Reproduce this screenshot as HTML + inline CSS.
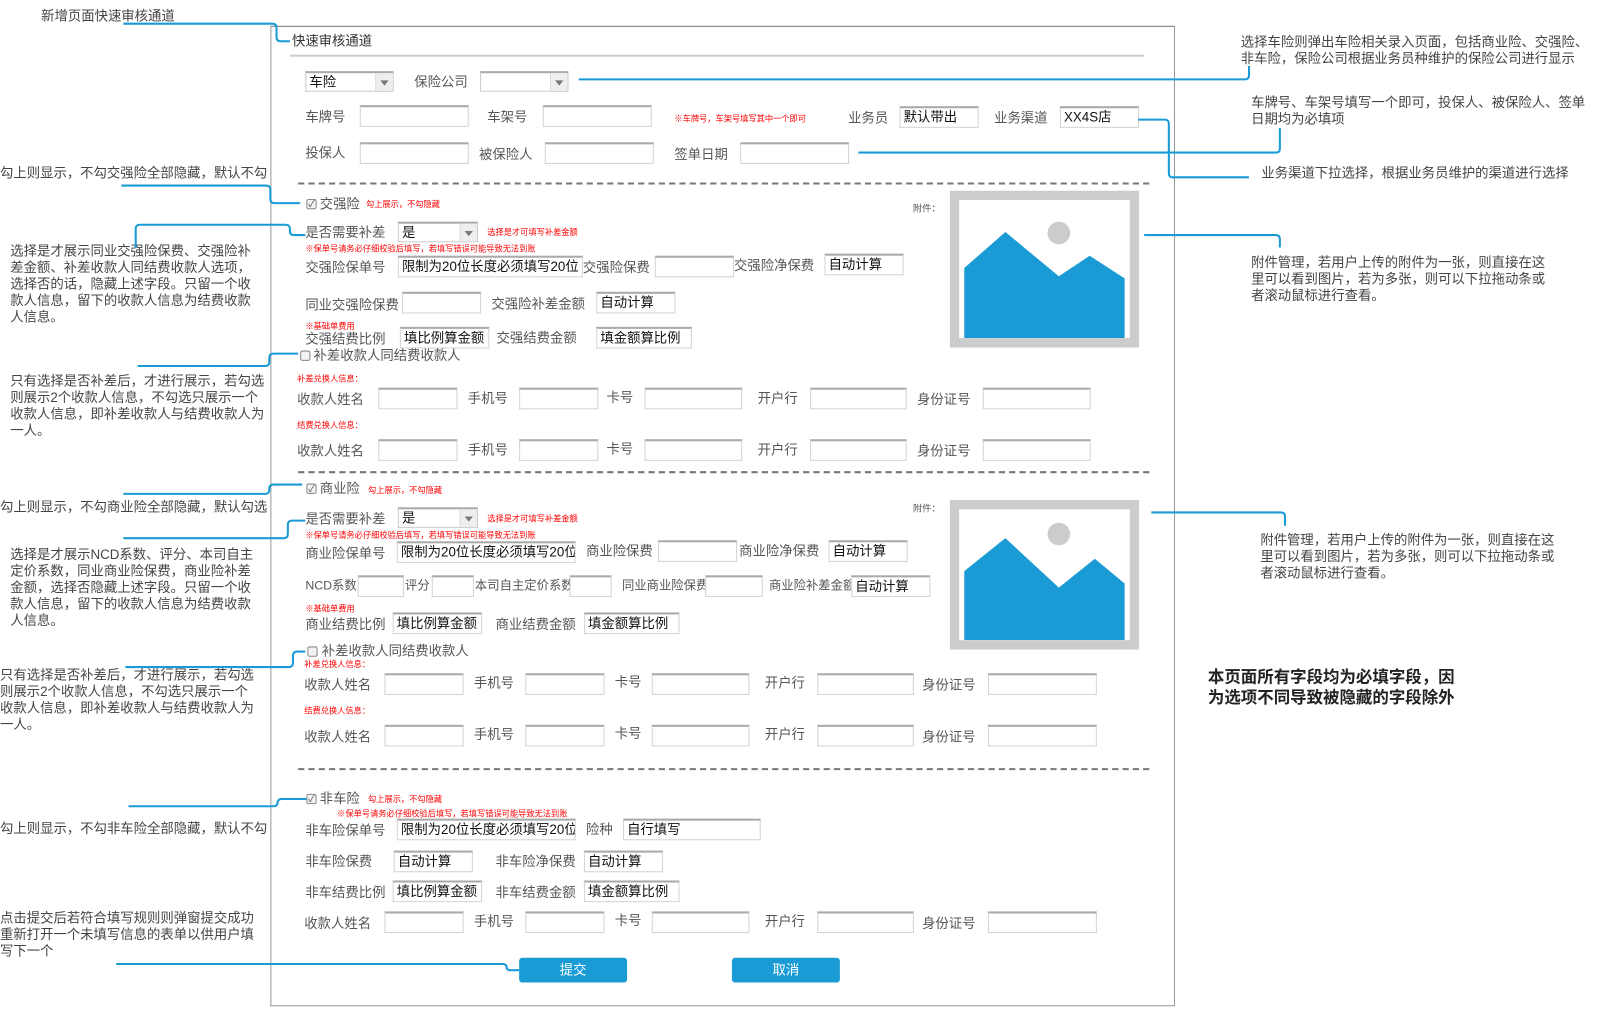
<!DOCTYPE html>
<html><head><meta charset="utf-8"><style>
*{margin:0;padding:0;box-sizing:border-box}
body{width:1610px;height:1015px;overflow:hidden;background:#fff;font-family:"Liberation Sans","Noto Sans CJK SC",sans-serif}
#c{position:absolute;left:0;top:0;width:1560px;height:984px;transform:scale(1.028,1.031);transform-origin:0 0}
.t{position:absolute;font-size:13px;color:#555;white-space:nowrap;line-height:16px}
.i{position:absolute;height:21px;border:1px solid #d4d4d4;border-top:2px solid #aaa;background:#fff;font-size:13px;line-height:18px;padding-left:3px;color:#111;white-space:nowrap;overflow:hidden}
.r{position:absolute;font-size:8px;color:#f00;white-space:nowrap;line-height:10px}
.sel{position:absolute;height:20px;border:1px solid #ccc;border-top:2px solid #aaa;background:#fff;font-size:13px;line-height:17px;padding-left:3px;color:#111}
.sel:after{content:"";position:absolute;right:0;top:0;width:16px;height:100%;background:#eee;border-left:1px solid #ddd}
.sel b{position:absolute;right:4px;top:7px;width:0;height:0;border-left:4px solid transparent;border-right:4px solid transparent;border-top:5px solid #777;z-index:2}
.cb{position:absolute;width:10px;height:10px;border:1px solid #888;border-radius:2px;background:#f3f3f3;font-size:9px;line-height:9px;text-align:center;color:#444}
.dash{position:absolute;left:290px;width:828px;border-top:2px dashed #777;height:0}
.a{position:absolute;font-size:13px;color:#444;line-height:16px}
.img{position:absolute;width:184px;background:#ccc;padding:9px}
.img div{position:relative;width:100%;height:100%;background:#fff;overflow:hidden}
.btn{position:absolute;width:105px;height:24px;background:#1a9bd5;border-radius:3px;color:#fff;font-size:13px;text-align:center;line-height:24px}
</style></head><body><div id="c">
<div style="position:absolute;left:263px;top:25px;width:880px;height:951px;border:1px solid #999;border-top-color:#777"></div>
<div class="t" style="left:284px;top:32px;color:#333">快速审核通道</div>
<div style="position:absolute;left:282px;top:53px;width:831px;height:2px;background:#ccc"></div>

<div class="sel" style="left:297px;top:69px;width:86px">车险<b></b></div>
<div class="t" style="left:403px;top:72px">保险公司</div>
<div class="sel" style="left:467px;top:69px;width:86px"><b></b></div>

<div class="t" style="left:297px;top:106px">车牌号</div><div class="i" style="left:350px;top:102px;width:106px"></div>
<div class="t" style="left:474px;top:106px">车架号</div><div class="i" style="left:528px;top:102px;width:106px"></div>
<div class="r" style="left:656px;top:111px">※车牌号，车架号填写其中一个即可</div>
<div class="t" style="left:825px;top:107px">业务员</div><div class="i" style="left:875px;top:103px;width:77px">默认带出</div>
<div class="t" style="left:967px;top:107px">业务渠道</div><div class="i" style="left:1031px;top:103px;width:77px">XX4S店</div>

<div class="t" style="left:297px;top:141px">投保人</div><div class="i" style="left:350px;top:138px;width:106px"></div>
<div class="t" style="left:466px;top:142px">被保险人</div><div class="i" style="left:530px;top:138px;width:106px"></div>
<div class="t" style="left:656px;top:142px">签单日期</div><div class="i" style="left:720px;top:138px;width:106px"></div>

<div class="dash" style="top:177px"></div>
<div class="cb" style="left:298px;top:193px">✓</div><div class="t" style="left:311px;top:190px">交强险</div><div class="r" style="left:356px;top:194px">勾上展示，不勾隐藏</div>
<div class="t" style="left:888px;top:194px;font-size:9px">附件：</div>
<div class="img" style="left:924px;top:185px;height:152px"><div><svg width="166" height="134" viewBox="0 0 166 134"><circle cx="97" cy="32" r="11" fill="#ccc"/><path d="M5 66 L45 31 L97 74 L127 54 L161 76 L161 134 L5 134Z" fill="#1a9bd5"/></svg></div></div>
<div class="t" style="left:297px;top:218px">是否需要补差</div>
<div class="sel" style="left:387px;top:215px;width:78px">是<b></b></div>
<div class="r" style="left:474px;top:221px">选择是才可填写补差金额</div>
<div class="r" style="left:297px;top:237px">※保单号请务必仔细校验后填写，若填写错误可能导致无法到账</div>
<div class="t" style="left:297px;top:252px">交强险保单号</div><div class="i" style="left:387px;top:248px;width:180px">限制为20位长度必须填写20位</div>
<div class="t" style="left:567px;top:252px">交强险保费</div><div class="i" style="left:637px;top:248px;width:77px"></div>
<div class="t" style="left:714px;top:250px">交强险净保费</div><div class="i" style="left:802px;top:246px;width:77px">自动计算</div>
<div class="t" style="left:297px;top:288px">同业交强险保费</div><div class="i" style="left:391px;top:283px;width:77px"></div>
<div class="t" style="left:478px;top:287px">交强险补差金额</div><div class="i" style="left:580px;top:283px;width:77px">自动计算</div>
<div class="r" style="left:297px;top:312px">※基础单费用</div>
<div class="t" style="left:297px;top:321px">交强结费比例</div><div class="i" style="left:389px;top:317px;width:87px">填比例算金额</div>
<div class="t" style="left:483px;top:320px">交强结费金额</div><div class="i" style="left:580px;top:317px;width:93px">填金额算比例</div>
<div class="cb" style="left:292px;top:340px"></div><div class="t" style="left:305px;top:337px">补差收款人同结费收款人</div>

<div class="r" style="left:289px;top:363px">补差兑换人信息：</div>
<div class="t" style="left:289px;top:380px">收款人姓名</div><div class="i" style="left:368px;top:376px;width:77px"></div>
<div class="t" style="left:455px;top:379px">手机号</div><div class="i" style="left:505px;top:376px;width:77px"></div>
<div class="t" style="left:590px;top:378px">卡号</div><div class="i" style="left:627px;top:376px;width:95px"></div>
<div class="t" style="left:737px;top:379px">开户行</div><div class="i" style="left:788px;top:376px;width:94px"></div>
<div class="t" style="left:892px;top:380px">身份证号</div><div class="i" style="left:956px;top:376px;width:105px"></div>
<div class="r" style="left:289px;top:408px">结费兑换人信息：</div>
<div class="t" style="left:289px;top:430px">收款人姓名</div><div class="i" style="left:368px;top:426px;width:77px"></div>
<div class="t" style="left:455px;top:429px">手机号</div><div class="i" style="left:505px;top:426px;width:77px"></div>
<div class="t" style="left:590px;top:428px">卡号</div><div class="i" style="left:627px;top:426px;width:95px"></div>
<div class="t" style="left:737px;top:429px">开户行</div><div class="i" style="left:788px;top:426px;width:94px"></div>
<div class="t" style="left:892px;top:430px">身份证号</div><div class="i" style="left:956px;top:426px;width:105px"></div>

<div class="dash" style="top:457px"></div>
<div class="cb" style="left:298px;top:469px">✓</div><div class="t" style="left:311px;top:466px">商业险</div><div class="r" style="left:358px;top:471px">勾上展示，不勾隐藏</div>
<div class="t" style="left:888px;top:485px;font-size:9px">附件：</div>
<div class="img" style="left:924px;top:485px;height:145px"><div><svg width="166" height="127" viewBox="0 0 166 127"><circle cx="97" cy="24" r="11" fill="#ccc"/><path d="M5 60 L45 28 L97 76 L132 48 L161 72 L161 127 L5 127Z" fill="#1a9bd5"/></svg></div></div>
<div class="t" style="left:297px;top:496px">是否需要补差</div>
<div class="sel" style="left:387px;top:492px;width:78px">是<b></b></div>
<div class="r" style="left:474px;top:499px">选择是才可填写补差金额</div>
<div class="r" style="left:297px;top:515px">※保单号请务必仔细校验后填写，若填写错误可能导致无法到账</div>
<div class="t" style="left:297px;top:529px">商业险保单号</div><div class="i" style="left:386px;top:525px;width:174px">限制为20位长度必须填写20位</div>
<div class="t" style="left:570px;top:527px">商业险保费</div><div class="i" style="left:640px;top:524px;width:77px"></div>
<div class="t" style="left:719px;top:527px">商业险净保费</div><div class="i" style="left:806px;top:524px;width:77px">自动计算</div>
<div class="t" style="left:297px;top:560px;font-size:12px">NCD系数</div><div class="i" style="left:348px;top:558px;width:45px"></div>
<div class="t" style="left:394px;top:560px;font-size:12px">评分</div><div class="i" style="left:420px;top:558px;width:41px"></div>
<div class="t" style="left:462px;top:560px;font-size:12px">本司自主定价系数</div><div class="i" style="left:554px;top:558px;width:41px"></div>
<div class="t" style="left:605px;top:560px;font-size:12px">同业商业险保费</div><div class="i" style="left:686px;top:558px;width:56px"></div>
<div class="t" style="left:748px;top:560px;font-size:12px">商业险补差金额</div><div class="i" style="left:828px;top:558px;width:77px">自动计算</div>
<div class="r" style="left:297px;top:586px">※基础单费用</div>
<div class="t" style="left:297px;top:598px">商业结费比例</div><div class="i" style="left:382px;top:594px;width:87px">填比例算金额</div>
<div class="t" style="left:482px;top:598px">商业结费金额</div><div class="i" style="left:568px;top:594px;width:93px">填金额算比例</div>
<div class="cb" style="left:299px;top:627px"></div><div class="t" style="left:313px;top:624px">补差收款人同结费收款人</div>

<div class="r" style="left:296px;top:640px">补差兑换人信息：</div>
<div class="t" style="left:296px;top:657px">收款人姓名</div><div class="i" style="left:374px;top:653px;width:77px"></div>
<div class="t" style="left:461px;top:655px">手机号</div><div class="i" style="left:511px;top:653px;width:77px"></div>
<div class="t" style="left:598px;top:654px">卡号</div><div class="i" style="left:634px;top:653px;width:95px"></div>
<div class="t" style="left:744px;top:655px">开户行</div><div class="i" style="left:795px;top:653px;width:94px"></div>
<div class="t" style="left:897px;top:657px">身份证号</div><div class="i" style="left:961px;top:653px;width:106px"></div>
<div class="r" style="left:296px;top:685px">结费兑换人信息：</div>
<div class="t" style="left:296px;top:707px">收款人姓名</div><div class="i" style="left:374px;top:703px;width:77px"></div>
<div class="t" style="left:461px;top:705px">手机号</div><div class="i" style="left:511px;top:703px;width:77px"></div>
<div class="t" style="left:598px;top:704px">卡号</div><div class="i" style="left:634px;top:703px;width:95px"></div>
<div class="t" style="left:744px;top:705px">开户行</div><div class="i" style="left:795px;top:703px;width:94px"></div>
<div class="t" style="left:897px;top:707px">身份证号</div><div class="i" style="left:961px;top:703px;width:106px"></div>

<div class="dash" style="top:745px"></div>
<div class="cb" style="left:298px;top:770px">✓</div><div class="t" style="left:311px;top:767px">非车险</div><div class="r" style="left:358px;top:771px">勾上展示，不勾隐藏</div>
<div class="r" style="left:328px;top:785px">※保单号请务必仔细校验后填写，若填写错误可能导致无法到账</div>
<div class="t" style="left:297px;top:798px">非车险保单号</div><div class="i" style="left:386px;top:794px;width:174px">限制为20位长度必须填写20位</div>
<div class="t" style="left:570px;top:797px">险种</div><div class="i" style="left:606px;top:794px;width:134px">自行填写</div>
<div class="t" style="left:297px;top:828px">非车险保费</div><div class="i" style="left:383px;top:825px;width:77px">自动计算</div>
<div class="t" style="left:482px;top:828px">非车险净保费</div><div class="i" style="left:568px;top:825px;width:77px">自动计算</div>
<div class="t" style="left:297px;top:858px">非车结费比例</div><div class="i" style="left:382px;top:854px;width:87px">填比例算金额</div>
<div class="t" style="left:482px;top:858px">非车结费金额</div><div class="i" style="left:568px;top:854px;width:93px">填金额算比例</div>
<div class="t" style="left:296px;top:888px">收款人姓名</div><div class="i" style="left:374px;top:884px;width:77px"></div>
<div class="t" style="left:461px;top:886px">手机号</div><div class="i" style="left:511px;top:884px;width:77px"></div>
<div class="t" style="left:598px;top:885px">卡号</div><div class="i" style="left:634px;top:884px;width:95px"></div>
<div class="t" style="left:744px;top:886px">开户行</div><div class="i" style="left:795px;top:884px;width:94px"></div>
<div class="t" style="left:897px;top:888px">身份证号</div><div class="i" style="left:961px;top:884px;width:106px"></div>

<div class="btn" style="left:505px;top:929px">提交</div>
<div class="btn" style="left:712px;top:929px">取消</div>

<!-- left annotations -->
<div class="a" style="left:40px;top:8px">新增页面快速审核通道</div>
<div class="a" style="left:0;top:160px">勾上则显示，不勾交强险全部隐藏，默认不勾</div>
<div class="a" style="left:10px;top:236px;width:240px">选择是才展示同业交强险保费、交强险补差金额、补差收款人同结费收款人选项，选择否的话，隐藏上述字段。只留一个收款人信息，留下的收款人信息为结费收款人信息。</div>
<div class="a" style="left:10px;top:362px;width:248px">只有选择是否补差后，才进行展示，若勾选则展示2个收款人信息，不勾选只展示一个收款人信息，即补差收款人与结费收款人为一人。</div>
<div class="a" style="left:0;top:484px">勾上则显示，不勾商业险全部隐藏，默认勾选</div>
<div class="a" style="left:10px;top:530px;width:245px">选择是才展示NCD系数、评分、本司自主定价系数，同业商业险保费，商业险补差金额，选择否隐藏上述字段。只留一个收款人信息，留下的收款人信息为结费收款人信息。</div>
<div class="a" style="left:0;top:647px;width:247px">只有选择是否补差后，才进行展示，若勾选则展示2个收款人信息，不勾选只展示一个收款人信息，即补差收款人与结费收款人为一人。</div>
<div class="a" style="left:0;top:796px">勾上则显示，不勾非车险全部隐藏，默认不勾</div>
<div class="a" style="left:0;top:883px;width:256px">点击提交后若符合填写规则则弹窗提交成功重新打开一个未填写信息的表单以供用户填写下一个</div>

<!-- right annotations -->
<div class="a" style="left:1207px;top:33px;width:346px">选择车险则弹出车险相关录入页面，包括商业险、交强险、非车险，保险公司根据业务员种维护的保险公司进行显示</div>
<div class="a" style="left:1217px;top:92px;width:332px">车牌号、车架号填写一个即可，投保人、被保险人、签单日期均为必填项</div>
<div class="a" style="left:1227px;top:160px">业务渠道下拉选择，根据业务员维护的渠道进行选择</div>
<div class="a" style="left:1217px;top:247px;width:292px">附件管理，若用户上传的附件为一张，则直接在这里可以看到图片，若为多张，则可以下拉拖动条或者滚动鼠标进行查看。</div>
<div class="a" style="left:1226px;top:516px;width:292px">附件管理，若用户上传的附件为一张，则直接在这里可以看到图片，若为多张，则可以下拉拖动条或者滚动鼠标进行查看。</div>
<div class="a" style="left:1175px;top:648px;width:250px;font-size:16px;font-weight:bold;color:#222;line-height:20px">本页面所有字段均为必填字段，因为选项不同导致被隐藏的字段除外</div>

<svg style="position:absolute;left:0;top:0" width="1560" height="984" fill="none" stroke="#1a9bd5" stroke-width="2">
<path d="M120 23 H265 Q269 23 269 27 V36 Q269 40 273 40 H282"/>
<path d="M118 180 H259 Q263 180 263 184 V193 Q263 197 267 197 H292"/>
<path d="M132 240 V222 Q132 218 136 218 H278 Q282 218 282 222 V224 Q282 228 286 228 H297"/>
<path d="M134 355 H258 Q262 355 262 351 V347 Q262 343 266 343 H290"/>
<path d="M120 479 H258 Q262 479 262 475 V474 Q262 470 266 470 H294"/>
<path d="M120 522 H276 Q280 522 280 518 V509 Q280 505 284 505 H297"/>
<path d="M122 647 H281 Q285 647 285 643 V636 Q285 632 289 632 H297"/>
<path d="M125 782 H266 Q270 782 270 778 V779 Q270 775 274 775 H298"/>
<path d="M113 935 H489 Q493 935 493 939 Q493 941 497 941 H505"/>
<path d="M563 77 H1211 Q1215 77 1215 73 V64"/>
<path d="M1107 116 H1133 Q1137 116 1137 120 V168 Q1137 172 1141 172 H1215"/>
<path d="M835 148 H1241 Q1245 148 1245 144 V124"/>
<path d="M1113 228 H1241 Q1245 228 1245 232 V240"/>
<path d="M1120 497 H1246 Q1250 497 1250 501 V510"/>
</svg>
</div></body></html>
